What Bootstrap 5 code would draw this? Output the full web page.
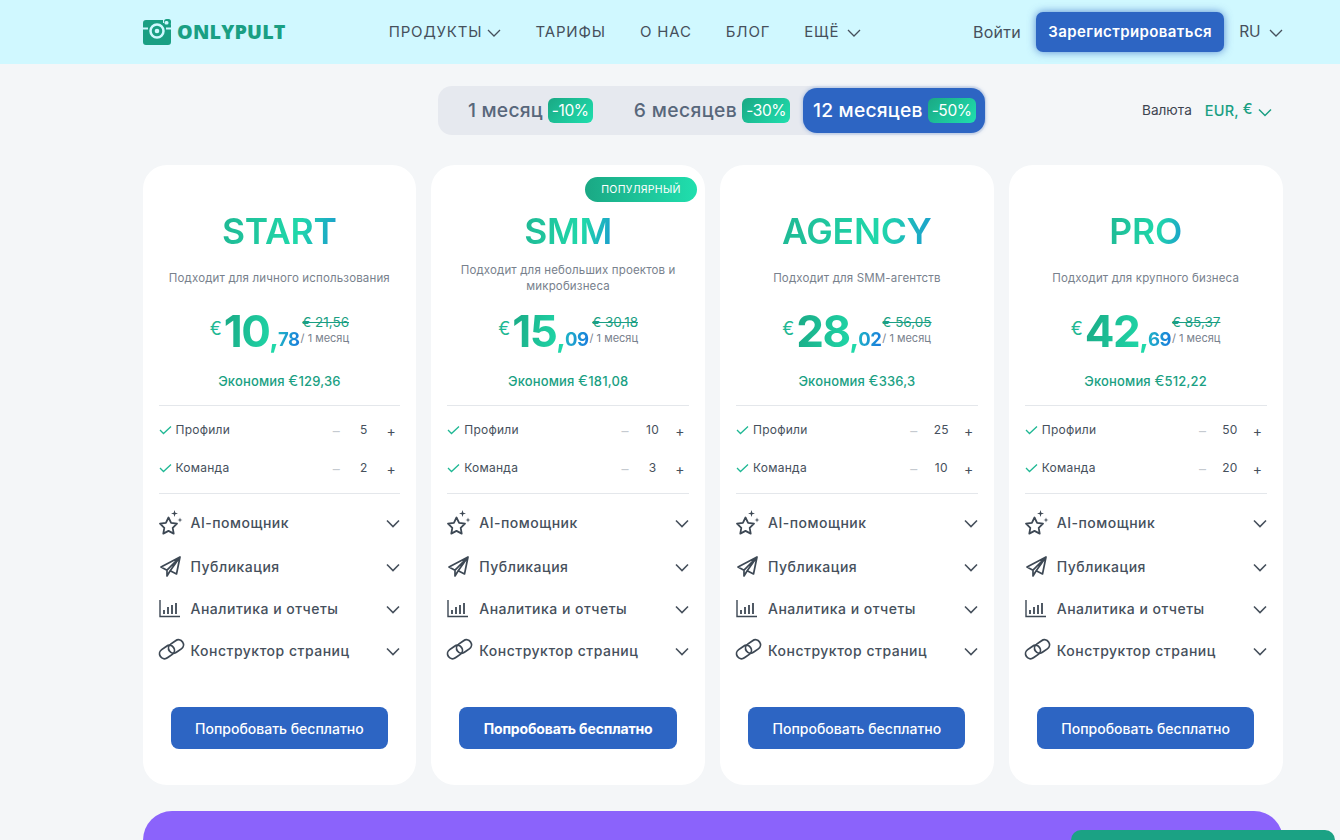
<!DOCTYPE html>
<html lang="ru">
<head>
  <meta charset="UTF-8">
  <meta name="viewport" content="width=device-width, initial-scale=1.0">
  <title>Onlypult</title>
  <link href="https://cdn.jsdelivr.net/npm/bootstrap@5.3.0/dist/css/bootstrap.min.css" rel="stylesheet">
  <style>
    html, body { height: 840px; overflow: hidden; }
    body { background: #f4f6f8; font-family: Inter, "Noto Sans", sans-serif; color: #46505c; }
    .top-bar { background: #d0f8ff; height: 64px; padding: 0 57px 0 143px; }
    .brand-name { font-family: "Open Sans", sans-serif; font-weight: 800; font-size: 19.7px; color: #1a9f83; letter-spacing: .2px; margin-left: 6px; }
    .top-menu { margin-left: 103px; gap: 34px; }
    .top-menu a { color: #46505c; font-size: 15px; text-decoration: none; letter-spacing: .85px; }
    .chev { display: inline-block; vertical-align: middle; }
    .top-menu .chev.wide { margin-left: 3px; }
    .login-link { color: #46505c; font-size: 16px; text-decoration: none; letter-spacing: .3px; }
    .reg-btn { background: #2d65c3; color: #fff; width: 188px; height: 40px; font-size: 15px; font-weight: 600; letter-spacing: .4px; border-radius: 7px; box-shadow: 0 0 8px rgba(45,101,195,.75); margin: 0 15px; padding: 0; border: 0; }
    .lang-link { color: #46505c; font-size: 15.5px; text-decoration: none; }
    .period-line { height: 101px; padding: 22px 0 0 143px; }
    .period-box { margin-left: 295px; width: 548px; height: 49px; background: #e6e9ef; border-radius: 14px; padding: 2px 1px 2px 0; }
    .period-item { font-size: 19.3px; font-weight: 500; color: #58677b; padding: 0 13px 0 30px; gap: 5px; letter-spacing: .2px; }
    .period-item.second { padding-left: 28px; padding-right: 0; letter-spacing: .4px; }
    .period-item.chosen { background: #2d65c3; color: #fff; border-radius: 14px; width: 182px; padding: 0 0 0 10px; margin-left: auto; box-shadow: 0 0 4px rgba(45,101,195,.45); }
    .off-tag { background: linear-gradient(135deg, #1aa884, #20dfae); color: #fff; font-size: 15.5px; font-weight: 400; border-radius: 6px; padding: 0 4px; line-height: 25px; letter-spacing: -.4px; }
    .money-pick { margin-left: 156px; height: 49px; font-size: 13.6px; color: #3d4450; }
    .money-pick b { font-weight: 500; font-size: 14.5px; color: #1a9f83; margin-left: 13px; letter-spacing: .2px; }
    .money-pick b span { position: relative; top: -2px; }
    .money-pick svg { margin-top: 3px; margin-left: 5px; }
    .plans { padding-left: 142.5px; width: 1282.5px; gap: 15px; }
    .plan { flex: 1 1 0; height: 620px; border: 0; border-radius: 24px; padding: 0 16px; text-align: center; position: relative; }
    .pop-tag { position: absolute; top: 12px; right: 8px; width: 112px; height: 25px; border-radius: 13px; background: linear-gradient(90deg, #1aa884, #20dfae); color: #fff; font-size: 10.5px; line-height: 25px; letter-spacing: .3px; }
    .plan-name { font-size: 35.5px; font-weight: 600; line-height: 44px; margin: 45px 0 0; background: linear-gradient(100deg, #1fb894 0%, #20d8aa 65%, #1b9ad0 100%); -webkit-background-clip: text; background-clip: text; color: transparent; display: inline-block; letter-spacing: -.2px; }
    .plan-note { height: 44px; margin: 8px 0 0; font-size: 11.5px; line-height: 16px; color: #78818d; padding: 8px 0 0; letter-spacing: .15px; }
    .plan-note.two { padding: 0; }
    .price-line { height: 50px; }
    .cur { font-size: 18px; color: #1fb894; margin-right: 2px; margin-top: -6px; }
    .whole { font-size: 44px; font-weight: 700; line-height: 56px; letter-spacing: -1.5px; margin-top: 5px; background: linear-gradient(100deg, #1aa884, #20dfae); -webkit-background-clip: text; background-clip: text; color: transparent; }
    .whole em { font-style: normal; font-size: 29px; letter-spacing: 0; }
    .cents { font-size: 18.5px; font-weight: 700; align-self: flex-end; margin-bottom: 2px; margin-left: -1px; background: linear-gradient(100deg, #1fb8c4, #1877e0); -webkit-background-clip: text; background-clip: text; color: transparent; letter-spacing: -.5px; }
    .price-side { margin-left: 1px; text-align: left; margin-top: -4px; }
    .old-price { font-size: 13.5px; line-height: 18px; color: #1a9f83; text-decoration: line-through; display: block; text-align: right; }
    .per-month { font-size: 11px; line-height: 14px; color: #78818d; display: block; white-space: nowrap; }
    .saving { font-size: 13px; font-weight: 500; color: #1a9f83; line-height: 20px; margin-top: 15px; padding-bottom: 14px; border-bottom: 1px solid #e4e7eb; letter-spacing: .15px; }
    .saving span { font-size: 15px; font-weight: 400; }
    .qty-box { padding: 5px 0 6px; border-bottom: 1px solid #e4e7eb; }
    .qty-row { height: 38px; font-size: 12px; color: #46505c; text-align: left; letter-spacing: .25px; }
    .qty-row .tick { margin: 0 4px 0 0; }
    .qty-nums { margin-left: auto; margin-right: 2px; width: 69px; font-size: 12px; margin-top: 1px; }
    .qty-nums i { font-style: normal; width: 14px; text-align: center; font-size: 14px; }
    .qty-nums i.off { color: #c5cad0; }
    .qty-nums span { flex: 1; text-align: center; margin-top: -2px; }
    .feature { height: 42px; font-size: 14px; font-weight: 450; color: #46505c; text-align: left; letter-spacing: .5px; }
    .feature.first { height: 46px; margin-top: 5px; }
    .feature svg.pic { width: 24px; height: 24px; margin-right: 8px; flex: none; overflow: visible; }
    .feature svg.chev { margin-left: auto; margin-top: 2px; }
    .try-btn { background: #2d65c3; color: #fff; width: 217px; height: 42px; border-radius: 8px; font-size: 14px; font-weight: 500; margin-top: 36px; padding: 0; border: 0; }
    .try-btn.strong { font-weight: 700; width: 218px; letter-spacing: -.15px; }
    .promo-band { margin: 26px 0 0 143px; width: 1140px; height: 29px; background: #8b63fb; border-radius: 30px 30px 0 0; }
    .chat-pill { position: absolute; left: 1071px; top: 830px; width: 264px; height: 10px; background: #1ba284; border-radius: 24px 24px 0 0; }
  </style>
</head>
<body>
<nav class="top-bar d-flex align-items-center">
  <a class="d-flex align-items-center text-decoration-none" href="#">
    <svg width="28" height="26" viewBox="0 0 28 26">
      <path fill="#1a9f83" d="M3 1h17v3h6a2 2 0 0 1 2 2v17a3 3 0 0 1-3 3H3a3 3 0 0 1-3-3V4a3 3 0 0 1 3-3z"/>
      <rect x="21" y="0" width="7" height="6" rx="2.500" fill="#1a9f83"/>
      <path d="M0 9.500h5M23 9.500h5" stroke="#d0f8ff" stroke-width="2"/>
      <circle cx="14" cy="12" r="6.500" fill="#1a9f83" stroke="#d0f8ff" stroke-width="2.500"/>
      <circle cx="14" cy="12" r="2.300" fill="#d0f8ff"/>
      <rect x="21.500" y="2" width="4" height="3.500" rx="1.500" fill="#d0f8ff"/>
    </svg>
    <span class="brand-name">ONLYPULT</span>
  </a>
  <div class="top-menu d-flex align-items-center">
    <a href="#">ПРОДУКТЫ <svg class="chev" width="14" height="8" viewBox="0 0 14 8"><path d="M1 1l6 6 6-6" fill="none" stroke="#46505c" stroke-width="1.300"/></svg></a>
    <a href="#">ТАРИФЫ</a>
    <a href="#">О НАС</a>
    <a href="#">БЛОГ</a>
    <a href="#">ЕЩЁ <svg class="chev wide" width="14" height="8" viewBox="0 0 14 8"><path d="M1 1l6 6 6-6" fill="none" stroke="#46505c" stroke-width="1.300"/></svg></a>
  </div>
  <div class="ms-auto d-flex align-items-center">
    <a class="login-link" href="#">Войти</a>
    <button class="btn reg-btn">Зарегистрироваться</button>
    <a class="lang-link" href="#">RU <svg class="chev ms-1" width="14" height="8" viewBox="0 0 14 8"><path d="M1 1l6 6 6-6" fill="none" stroke="#46505c" stroke-width="1.300"/></svg></a>
  </div>
</nav>

<div class="period-line d-flex align-items-start">
  <div class="period-box d-flex align-items-stretch">
    <div class="period-item d-flex align-items-center">1 месяц <span class="off-tag">-10%</span></div>
    <div class="period-item second d-flex align-items-center">6 месяцев <span class="off-tag">-30%</span></div>
    <div class="period-item chosen d-flex align-items-center">12 месяцев <span class="off-tag">-50%</span></div>
  </div>
  <div class="money-pick d-flex align-items-center">Валюта <b>EUR, <span>€</span></b>
    <svg width="14" height="9" viewBox="0 0 14 9"><path d="M1 1.500l6 6 6-6" fill="none" stroke="#1a9f83" stroke-width="1.500"/></svg>
  </div>
</div>

<div id="plans" class="plans d-flex align-items-start"></div>

<div class="promo-band"></div>
<div class="chat-pill"></div>

<script>
  const chev = '<svg class="chev" width="14" height="9" viewBox="0 0 14 9"><path d="M1 1.500l6 6 6-6" fill="none" stroke="#46505c" stroke-width="1.600"/></svg>';
  const tick = '<svg class="tick" width="13" height="10" viewBox="0 0 13 10"><path d="M1 5l3.500 3.500L12 1.500" fill="none" stroke="#1fb894" stroke-width="1.300"/></svg>';
  const pics = [
    '<path d="M9.500 7.500l2.600 5.300 5.900.9-4.300 4.100 1 5.800-5.200-2.700-5.200 2.700 1-5.800L1 13.700l5.900-.9z" fill="none" stroke="#3d4854" stroke-width="1.800" stroke-linejoin="round"/><path d="M15.500 0l.8 2.700 2.700.8-2.700.8-.8 2.700-.8-2.700-2.700-.8 2.700-.8zM21 7.500l.6 1.900 1.900.6-1.900.6-.6 1.900-.6-1.900-1.900-.6 1.900-.6z" fill="#3d4854"/>',
    '<path d="M21 3L2 13l6 3.200L21 3zM21 3l-3.500 17-6.300-3.300L21 3zM8 16.200V22l3.200-5.300" fill="none" stroke="#3d4854" stroke-width="1.700" stroke-linejoin="round"/>',
    '<path d="M1 4v16.500h20" fill="none" stroke="#3d4854" stroke-width="1.400"/><path d="M5 14v4M9 11v7M13 9v9M17 7v11" stroke="#3d4854" stroke-width="1.800"/>',
    '<g fill="none" stroke="#3d4854" stroke-width="1.800"><rect x="0" y="9" width="16" height="10" rx="5" transform="rotate(-35 8 14)"/><rect x="9" y="3.500" width="16" height="10" rx="5" transform="rotate(-35 17 8.500)"/></g>'
  ];
  const features = ['AI-помощник', 'Публикация', 'Аналитика и отчеты', 'Конструктор страниц'];
  const plans = [
    { name: 'START', note: 'Подходит для личного использования', whole: '10', cents: '78', old: '€ 21,56', save: '129,36', profiles: 5, team: 2 },
    { name: 'SMM', note: 'Подходит для небольших проектов и микробизнеса', two: true, popular: true, whole: '15', cents: '09', old: '€ 30,18', save: '181,08', profiles: 10, team: 3 },
    { name: 'AGENCY', note: 'Подходит для SMM-агентств', whole: '28', cents: '02', old: '€ 56,05', save: '336,3', profiles: 25, team: 10 },
    { name: 'PRO', note: 'Подходит для крупного бизнеса', whole: '42', cents: '69', old: '€ 85,37', save: '512,22', profiles: 50, team: 20 }
  ];
  const qty = (label, n) => `
    <div class="qty-row d-flex align-items-center">${tick}${label}
      <div class="qty-nums d-flex align-items-center"><i class="off">–</i><span>${n}</span><i>+</i></div>
    </div>`;
  document.getElementById('plans').innerHTML = plans.map(p => `
    <div class="card plan">
      ${p.popular ? '<div class="pop-tag">ПОПУЛЯРНЫЙ</div>' : ''}
      <div><h2 class="plan-name">${p.name}</h2></div>
      <p class="plan-note ${p.two ? 'two' : ''}">${p.note}</p>
      <div class="price-line d-flex justify-content-center align-items-center">
        <span class="cur">€</span><span class="whole">${p.whole}<em>,</em></span><span class="cents">${p.cents}</span>
        <div class="price-side"><span class="old-price">${p.old}</span><span class="per-month">/ 1 месяц</span></div>
      </div>
      <div class="saving">Экономия <span>€</span>${p.save}</div>
      <div class="qty-box">${qty('Профили', p.profiles)}${qty('Команда', p.team)}</div>
      ${features.map((f, i) => `
        <div class="feature ${i === 0 ? 'first' : ''} d-flex align-items-center">
          <svg class="pic" viewBox="0 0 24 24">${pics[i]}</svg>${f}${chev}
        </div>`).join('')}
      <div><button class="btn try-btn ${p.popular ? 'strong' : ''}">Попробовать бесплатно</button></div>
    </div>`).join('');
</script>
<script src="https://cdn.jsdelivr.net/npm/bootstrap@5.3.0/dist/js/bootstrap.bundle.min.js"></script>
</body>
</html>
